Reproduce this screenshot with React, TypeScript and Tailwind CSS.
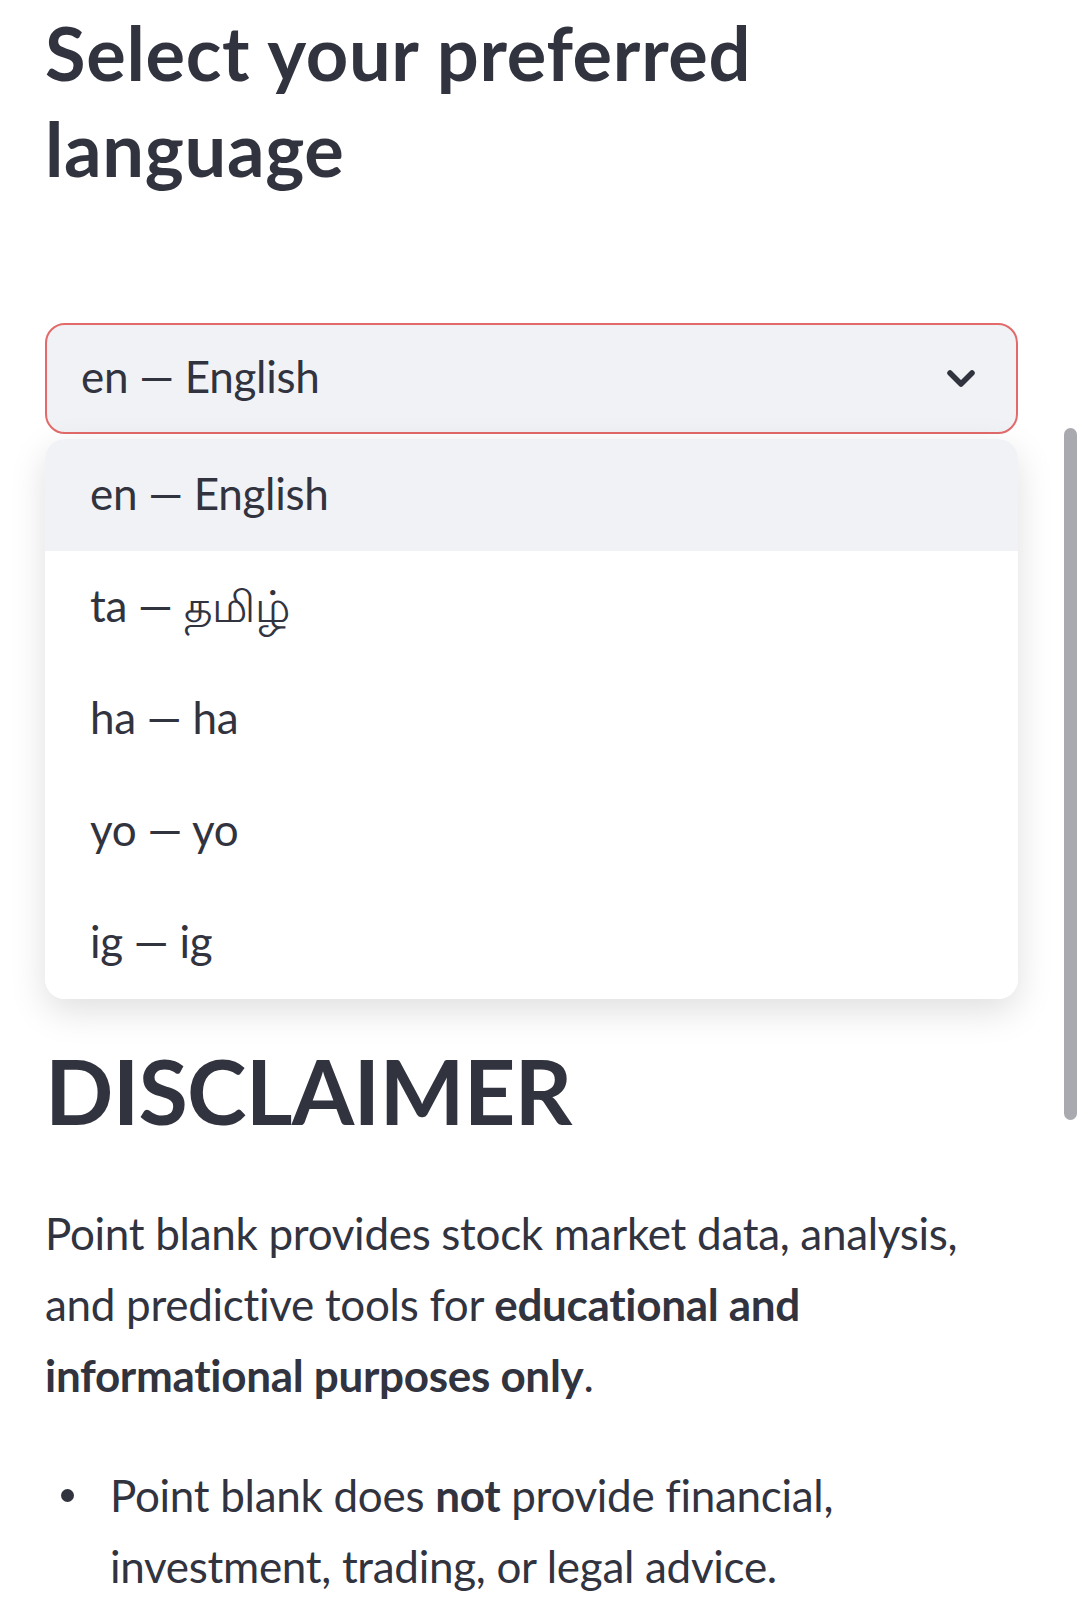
import React from "react";

const languages = [
  { code: "en", label: "English" },
  { code: "ta", label: "தமிழ்" },
  { code: "ha", label: "ha" },
  { code: "yo", label: "yo" },
  { code: "ig", label: "ig" },
];

export default function App() {
  const selected = "en";

  return (
    <div className="relative min-h-[1619px] overflow-hidden bg-white font-[family-name:Lato,sans-serif] text-[#31333f]">
      <div className="ml-[45px] w-[973px] pt-[5px]">
        <h2 className="w-[900px] text-[74px] font-bold leading-[96px] tracking-[0.7px]">
          Select your preferred language
        </h2>

        {/* Language select with its open menu */}
        <div className="relative mt-[126px]">
          <div className="flex h-[111px] items-center justify-between rounded-[20px] border-2 border-[#e26a6a] bg-[#f0f2f6] pl-[34px] pr-[40px]">
            <span className="pb-[5px] text-[44px] leading-[52px] tracking-[-0.3px]">en — English</span>
            <svg width="30" height="19" viewBox="0 0 30 19" fill="none">
              <polyline
                points="4,4 15,15 26,4"
                stroke="#31333f"
                strokeWidth="5.5"
                strokeLinecap="round"
                strokeLinejoin="round"
              />
            </svg>
          </div>

          <div className="absolute left-0 right-0 top-[116px] z-10 overflow-hidden rounded-[20px] bg-white shadow-[0_12px_36px_rgba(0,0,0,0.13)]">
            {languages.map((lang) => (
              <div
                key={lang.code}
                className={`flex h-[112px] items-center pl-[45px] ${
                  lang.code === selected ? "bg-[#f0f2f6]" : "bg-white"
                }`}
              >
                <span className="pb-[4px] text-[44px] leading-[52px] tracking-[-0.3px]">
                  {lang.code} — {lang.label}
                </span>
              </div>
            ))}
          </div>
        </div>

        <h1 className="mt-[602px] text-[90px] font-bold leading-[108px] tracking-[-0.8px]">DISCLAIMER</h1>

        <p className="mt-[54px] text-[44px] leading-[71px] tracking-[-0.3px]">
          Point blank provides stock market data, analysis, and predictive tools for{" "}
          <strong className="font-bold">educational and informational purposes only</strong>.
        </p>

        <ul className="mt-[49px] text-[44px] leading-[71px] tracking-[-0.3px]">
          <li className="flex">
            <div className="w-[65px] shrink-0">
              <div className="ml-[16px] mt-[29px] h-[13px] w-[13px] rounded-full bg-[#31333f]" />
            </div>
            <div>
              Point blank does <strong className="font-bold">not</strong> provide financial, investment,
              trading, or legal advice.
            </div>
          </li>
        </ul>
      </div>

      {/* overlay scrollbar */}
      <div className="absolute left-[1064px] top-[428px] h-[692px] w-[13px] rounded-full bg-[#a9a9b0]" />
    </div>
  );
}
